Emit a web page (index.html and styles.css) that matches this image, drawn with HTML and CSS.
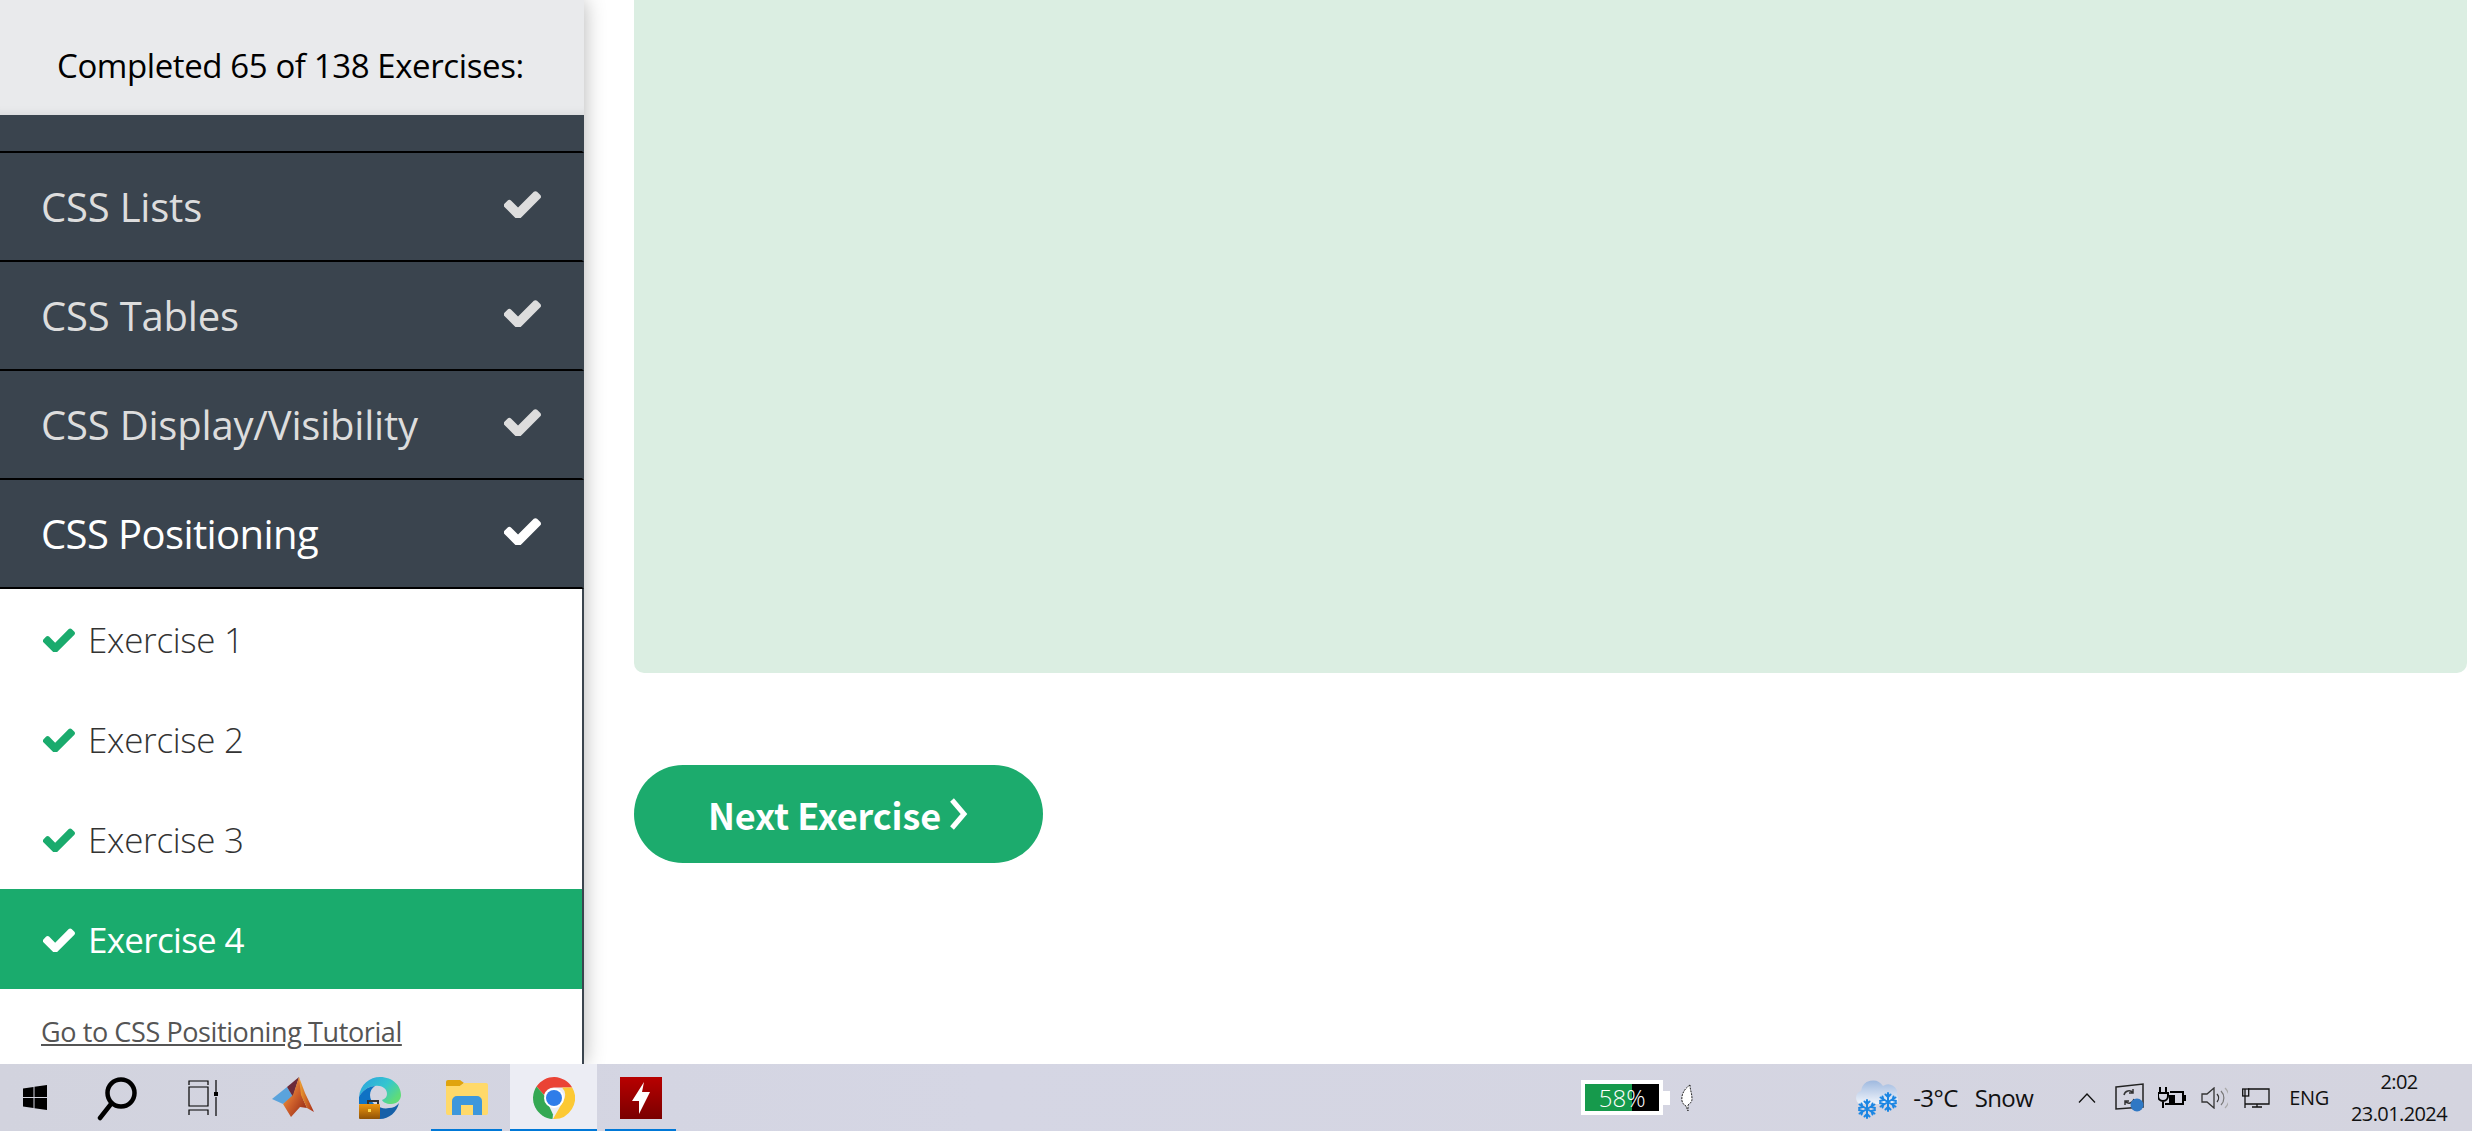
FILE: index.html
```html
<!DOCTYPE html>
<html lang="en">
<head>
<meta charset="utf-8">
<title>CSS Positioning - Exercise 4</title>
<link rel="stylesheet" href="styles.css">
</head>
<body>

<svg class="defs" width="0" height="0">
	<symbol id="check" viewBox="130 340 1541 1100">
		<path d="M1671 566q0 40-28 68l-724 724-136 136q-28 28-68 28t-68-28l-136-136-362-362q-28-28-28-68t28-68l136-136q28-28 68-28t68 28l294 295 656-657q28-28 68-28t68 28l136 136q28 28 28 68z"/>
	</symbol>
	<symbol id="flake" viewBox="0 0 18 20">
		<g fill="none" stroke="#1b86e3" stroke-width="2" stroke-linecap="round">
			<path d="M9 1v18M1.500 5.500l15 9M16.500 5.500l-15 9"/>
			<path d="M6.500 2.500 9 5l2.500-2.500M6.500 17.500 9 15l2.500 2.500M1 9l3.500-1L3.500 4.500M17 9l-3.500-1 1-3.500M1 11l3.500 1-1 3.500M17 11l-3.500 1 1 3.500"/>
		</g>
	</symbol>
</svg>

<div class="page">
	<!-- left menu -->
	<aside class="sidebar">
		<div class="progress">Completed 65 of 138 Exercises:</div>
		<div class="topic topic-stub"></div>
		<div class="topic"><span>CSS Lists</span><svg class="topic-check"><use href="#check"/></svg></div>
		<div class="topic"><span>CSS Tables</span><svg class="topic-check"><use href="#check"/></svg></div>
		<div class="topic"><span>CSS Display/Visibility</span><svg class="topic-check"><use href="#check"/></svg></div>
		<div class="topic topic-open"><span>CSS Positioning</span><svg class="topic-check"><use href="#check"/></svg></div>
		<div class="exercises">
			<div class="exercise"><svg class="exercise-check"><use href="#check"/></svg>Exercise 1</div>
			<div class="exercise"><svg class="exercise-check"><use href="#check"/></svg>Exercise 2</div>
			<div class="exercise"><svg class="exercise-check"><use href="#check"/></svg>Exercise 3</div>
			<div class="exercise exercise-current"><svg class="exercise-check"><use href="#check"/></svg>Exercise 4</div>
			<a class="tutorial-link" href="#">Go to CSS Positioning Tutorial</a>
		</div>
	</aside>

	<!-- exercise area -->
	<main class="content">
		<div class="result-panel"></div>
		<a class="next-button" href="#">Next Exercise
			<svg class="next-arrow" viewBox="0 0 21 32"><path d="M4 2 L16 16 L4 30"/></svg>
		</a>
	</main>
</div>

<!-- windows taskbar -->
<footer class="taskbar">
	<div class="task-tools">
		<div class="tool tool-start">
			<svg width="24" height="25" viewBox="0 0 24 25"><path d="M0 3.500 10.500 2v10H0zM11.500 1.800 24 0v12H11.500zM0 13h10.500v10L0 21.500zM11.500 13H24v12l-12.500-1.800z"/></svg>
		</div>
		<div class="tool tool-search">
			<svg width="42" height="46" viewBox="0 0 42 46"><circle cx="24" cy="18" r="13.500" fill="none" stroke="#000" stroke-width="4.500"/><path d="M14 29 3 43" stroke="#000" stroke-width="4.500" stroke-linecap="round"/></svg>
		</div>
		<div class="tool tool-view">
			<svg width="30" height="36" viewBox="0 0 30 36" fill="none" stroke="#000" stroke-width="1.200"><path d="M1 5V1h19v4M1 7h19v19H1zM1 35v-5h19v5M28 0v12M28 17v19"/><rect x="26" y="12" width="4" height="4" fill="#000" stroke="none"/></svg>
		</div>
	</div>
	<div class="task-apps">
		<div class="app">
			<svg width="42" height="42" viewBox="0 0 42 42">
				<defs>
					<linearGradient id="mlab" x1="0" y1="0" x2="1" y2="1"><stop offset="0" stop-color="#f7bd45"/><stop offset=".5" stop-color="#d0622c"/><stop offset="1" stop-color="#8a1f12"/></linearGradient>
					<linearGradient id="mlabSide" x1="0" y1="0" x2="1" y2="0"><stop offset="0" stop-color="#f0a534"/><stop offset="1" stop-color="#a92a18"/></linearGradient>
				</defs>
				<path d="M0 22 15 10 21 20 11 27z" fill="#5aa3dc"/>
				<path d="M15 10 27 0 21 20z" fill="#6b2a3a"/>
				<path d="M21 18 27 0 31 22 35 31 28 30 19 40 11 27z" fill="url(#mlab)"/>
				<path d="M27 0 33 16 42 35 35 31 29 18z" fill="url(#mlabSide)"/>
			</svg>
		</div>
		<div class="app">
			<svg width="42" height="42" viewBox="0 0 42 42">
				<defs>
					<linearGradient id="edgeTop" x1="0" y1="0" x2="1" y2=".6"><stop offset="0" stop-color="#2a9fe0"/><stop offset=".6" stop-color="#35c6cf"/><stop offset="1" stop-color="#5fdc78"/></linearGradient>
					<linearGradient id="caseBody" x1="0" y1="0" x2="0" y2="1"><stop offset="0" stop-color="#f0970f"/><stop offset="1" stop-color="#8f5206"/></linearGradient>
				</defs>
				<path d="M0 20C1 7 11 0 21 0c13 0 21 9 21 18 0 5-4 9-10 9-5 0-8-2-9-4 3-1 5-3 5-6 0-6-6-9-12-8C8 10 3 14 0 20z" fill="url(#edgeTop)"/>
				<path d="M0 20C3 14 8 10 16 9c-3 2-5 5-5 9 0 4 2 7 4 9H0z" fill="#0f72c4"/>
				<path d="M18 28c2 3 8 4 12 3 4 0 8-2 10-5-2 9-10 16-19 16h-3z" fill="#1660a8"/>
				<path d="M9 27v-3h10v3" fill="none" stroke="#333" stroke-width="2"/>
				<rect x="0" y="27" width="21" height="15" rx="1" fill="url(#caseBody)"/>
				<rect x="9" y="32" width="3" height="3" fill="#ffd84a"/>
			</svg>
		</div>
		<div class="app">
			<svg width="42" height="42" viewBox="0 0 42 42">
				<path d="M0 5a2 2 0 0 1 2-2h12l4 3-4 3H0z" fill="#e0a40e"/>
				<path d="M0 9h14l4-3h22a2 2 0 0 1 2 2v28a2 2 0 0 1-2 2H2a2 2 0 0 1-2-2z" fill="#ffd96a"/>
				<path d="M6 38V24a5 5 0 0 1 5-5h20a5 5 0 0 1 5 5v14h-9V28H15v10z" fill="#3d97dc"/>
			</svg>
		</div>
		<div class="app app-active">
			<svg width="42" height="42" viewBox="0 0 42 42">
				<path d="M3.500 9.500A21 21 0 0 1 39.200 10.500H21a10.500 10.500 0 0 0-10 7.500z" fill="#ea4335"/>
				<path d="M3.500 9.500 11 18l9 19.500-.5 4.500A21 21 0 0 1 3.500 9.500z" fill="#34a853"/>
				<path d="M39.200 10.500A21 21 0 0 1 20 41.900l10-17.500a10.500 10.500 0 0 0-1-13.900z" fill="#fcc934"/>
				<circle cx="21" cy="21" r="10" fill="#fff"/>
				<circle cx="21" cy="21" r="8" fill="#2f7de9"/>
			</svg>
		</div>
		<div class="app">
			<svg width="42" height="42" viewBox="0 0 42 42">
				<defs><linearGradient id="flashBg" x1="0" y1="0" x2="0" y2="1"><stop offset="0" stop-color="#b80000"/><stop offset="1" stop-color="#7a0000"/></linearGradient></defs>
				<rect width="42" height="42" fill="url(#flashBg)"/>
				<path d="M24 5 12 24h7v13l11-22h-8z" fill="#fff"/>
			</svg>
		</div>
	</div>

	<div class="tray">
		<div class="battery">
			<div class="battery-cell"><span class="battery-text">58%</span></div>
			<div class="battery-nub"></div>
		</div>
		<svg class="leaf" width="12" height="28" viewBox="0 0 12 28"><path d="M9 1C3 5 0 11 1 17c1 3 2 4 4 5l2 5V21c3-2 4-4 4-6C11 9 9 6 9 1z" fill="#fff" stroke="#222" stroke-width="1" stroke-dasharray="2 1"/></svg>
		<svg class="weather" width="44" height="42" viewBox="0 0 44 42">
			<defs><linearGradient id="cloud" x1="0" y1="0" x2="0" y2="1"><stop offset="0" stop-color="#9fb9df"/><stop offset="1" stop-color="#f0f4fb"/></linearGradient></defs>
			<path d="M5 27a7 7 0 0 1 1-13 12 12 0 0 1 22-5 9 9 0 0 1 14 9c2 3 1 9-3 9z" fill="url(#cloud)"/>
			<use href="#flake" x="3" y="22" width="18" height="20"/>
			<use href="#flake" x="24" y="15" width="18" height="20"/>
		</svg>
		<div class="weather-text"><span>-3°C</span><span>Snow</span></div>
		<svg class="chevron" width="18" height="10" viewBox="0 0 18 10"><path d="M1 9.500 9 1l8 8.500" fill="none" stroke="#111" stroke-width="1.300"/></svg>
		<svg class="sync" width="29" height="29" viewBox="0 0 29 29">
			<path d="M1 4 28 1v23L1 26z" fill="none" stroke="#222" stroke-width="1.500"/>
			<path d="M9 12a5 5 0 0 1 9-2M19 16a5 5 0 0 1-9 2M18 6v4h-4M10 22v-4h4" fill="none" stroke="#333" stroke-width="1.500"/>
			<circle cx="22" cy="22" r="6.500" fill="#2f78c4"/>
		</svg>
		<svg class="plug" width="28" height="21" viewBox="0 0 28 21" fill="none" stroke="#000" stroke-width="2">
			<path d="M2 0v6M8 0v6M0 6h10v3a5 5 0 0 1-10 0zM5 13v8"/>
			<path d="M12 5h13v12H7" />
			<rect x="11" y="8" width="6" height="8" fill="#000" stroke="none"/>
			<rect x="25" y="8" width="3" height="6" fill="#000" stroke="none"/>
		</svg>
		<svg class="speaker" width="27" height="22" viewBox="0 0 27 22" fill="none">
			<path d="M1 7h5l7-6v20l-7-6H1z" stroke="#333" stroke-width="1.300"/>
			<path d="M16 7a6 6 0 0 1 0 8" stroke="#333" stroke-width="1.300"/>
			<path d="M20 4a10 10 0 0 1 0 14" stroke="#777" stroke-width="1.200"/>
			<path d="M24 1a14 14 0 0 1 0 20" stroke="#aaa" stroke-width="1.200"/>
		</svg>
		<svg class="monitor" width="28" height="20" viewBox="0 0 28 20" fill="none" stroke="#111" stroke-width="1.300">
			<path d="M6 1h21v15H3M15 16v3M10 19h10M3 1v19"/>
			<rect x=".7" y="1" width="6" height="7"/>
		</svg>
		<div class="lang">ENG</div>
		<div class="clock"><span>2:02</span><span>23.01.2024</span></div>
	</div>
</footer>

</body>
</html>
```

FILE: styles.css
```css
* {
	box-sizing: border-box;
}

html, body {
	margin: 0;
	height: 100%;
	overflow: hidden;
}

body {
	display: flex;
	flex-direction: column;
	font-family: "Open Sans", "Noto Sans", sans-serif;
	background-color: #fff;
}

.defs {
	position: absolute;
}

.page {
	display: flex;
	height: 1064px;
	overflow: hidden;
}

/* left menu */
.sidebar {
	flex: 0 0 584px;
	height: 1064px;
	background-color: #fff;
	box-shadow: 0 0 20px rgba(0, 0, 0, 0.3);
	position: relative;
	z-index: 1;
}

.progress {
	height: 115px;
	padding-top: 44px;
	padding-left: 57px;
	font-size: 33px;
	line-height: 44px;
	letter-spacing: -0.4px;
	color: #000;
	background-color: #e9eaec;
	box-shadow: inset 0 -10px 8px -8px rgba(0, 0, 0, 0.07);
}

.topic {
	display: flex;
	justify-content: space-between;
	align-items: center;
	height: 109px;
	padding-left: 41px;
	padding-right: 41px;
	font-size: 40px;
	letter-spacing: -0.2px;
	color: #ddd;
	background-color: #3a444e;
	border-bottom: 2px solid #000;
	border-right: 2px solid #3a444e;
}

.topic-stub {
	height: 38px;
}

.topic-open {
	color: #fff;
	letter-spacing: -0.6px;
}

.topic-check {
	width: 37px;
	height: 27px;
	fill: currentColor;
	margin-top: -4px;
}

.exercises {
	height: 476px;
	border-right: 2px solid #3a444e;
}

.exercise {
	display: flex;
	align-items: center;
	height: 100px;
	padding-left: 43px;
	font-size: 35px;
	font-weight: 300;
	letter-spacing: -0.3px;
	color: #333;
}

.exercise-check {
	width: 32px;
	height: 24px;
	margin-top: 2px;
	margin-right: 13px;
	fill: #1aab6d;
}

.exercise-current {
	color: #fff;
	font-weight: 400;
	letter-spacing: -0.7px;
	background-color: #1aab6d;
}

.exercise-current .exercise-check {
	fill: #fff;
}

.tutorial-link {
	display: block;
	padding-left: 41px;
	padding-top: 24px;
	font-size: 27px;
	letter-spacing: -0.4px;
	color: #555;
}

/* exercise area */
.content {
	flex: 1;
	padding-left: 50px;
	padding-right: 5px;
}

.result-panel {
	height: 673px;
	background-color: #dbeee2;
	border-radius: 0 0 10px 10px;
}

.next-button {
	display: flex;
	justify-content: center;
	align-items: center;
	gap: 7px;
	width: 409px;
	height: 98px;
	margin-top: 92px;
	font-family: "Noto Sans CJK JP", "Noto Sans", sans-serif;
	font-size: 36px;
	font-weight: 700;
	letter-spacing: -0.1px;
	color: #fff;
	text-decoration: none;
	background-color: #1cab6d;
	border-radius: 49px;
}

.next-arrow {
	width: 21px;
	height: 32px;
	fill: none;
	stroke: #fff;
	stroke-width: 5;
}

/* windows taskbar */
.taskbar {
	display: flex;
	align-items: center;
	height: 67px;
	background: linear-gradient(90deg, #d2d3de, #d5d6e4 40%, #d4d4df);
}

.task-tools {
	display: flex;
	align-items: center;
}

.tool {
	display: flex;
	justify-content: center;
	align-items: center;
	height: 67px;
}

.tool-start {
	width: 70px;
}

.tool-search {
	width: 96px;
}

.tool-view {
	width: 74px;
}

.task-apps {
	display: flex;
	margin-left: 9px;
}

.app {
	display: flex;
	justify-content: center;
	align-items: center;
	position: relative;
	width: 87px;
	height: 67px;
}

.app:nth-child(n+3)::after {
	content: "";
	position: absolute;
	left: 8px;
	right: 8px;
	bottom: 0;
	height: 2px;
	background-color: #0078d7;
}

.app-active {
	background-color: #ecedf4;
}

.app-active::after {
	left: 0 !important;
	right: 0 !important;
}

.tray {
	display: flex;
	align-items: center;
	margin-left: auto;
	padding-right: 25px;
	color: #111;
}

.battery {
	display: flex;
	align-items: center;
}

.battery-cell {
	width: 82px;
	height: 35px;
	border: 4px solid #fff;
	background: linear-gradient(90deg, #169a4c 0, #169a4c 47px, #000 47px);
}

.battery-text {
	display: block;
	font-size: 24px;
	font-weight: 300;
	line-height: 27px;
	text-align: center;
	color: #fff;
}

.battery-nub {
	width: 7px;
	height: 14px;
	background-color: #fff;
}

.leaf {
	margin-left: 11px;
}

.weather {
	margin-left: 162px;
}

.weather-text {
	display: flex;
	gap: 17px;
	margin-left: 14px;
	font-size: 24px;
	letter-spacing: -0.6px;
}

.chevron {
	margin-left: 45px;
}

.sync {
	margin-left: 19px;
}

.plug {
	margin-left: 14px;
}

.speaker {
	margin-left: 15px;
}

.monitor {
	margin-left: 14px;
}

.lang {
	margin-left: 19px;
	font-size: 20px;
	letter-spacing: -0.3px;
}

.clock {
	display: flex;
	flex-direction: column;
	align-items: center;
	gap: 10px;
	margin-left: 22px;
	font-size: 20px;
	line-height: 22px;
	letter-spacing: -0.6px;
}
```
